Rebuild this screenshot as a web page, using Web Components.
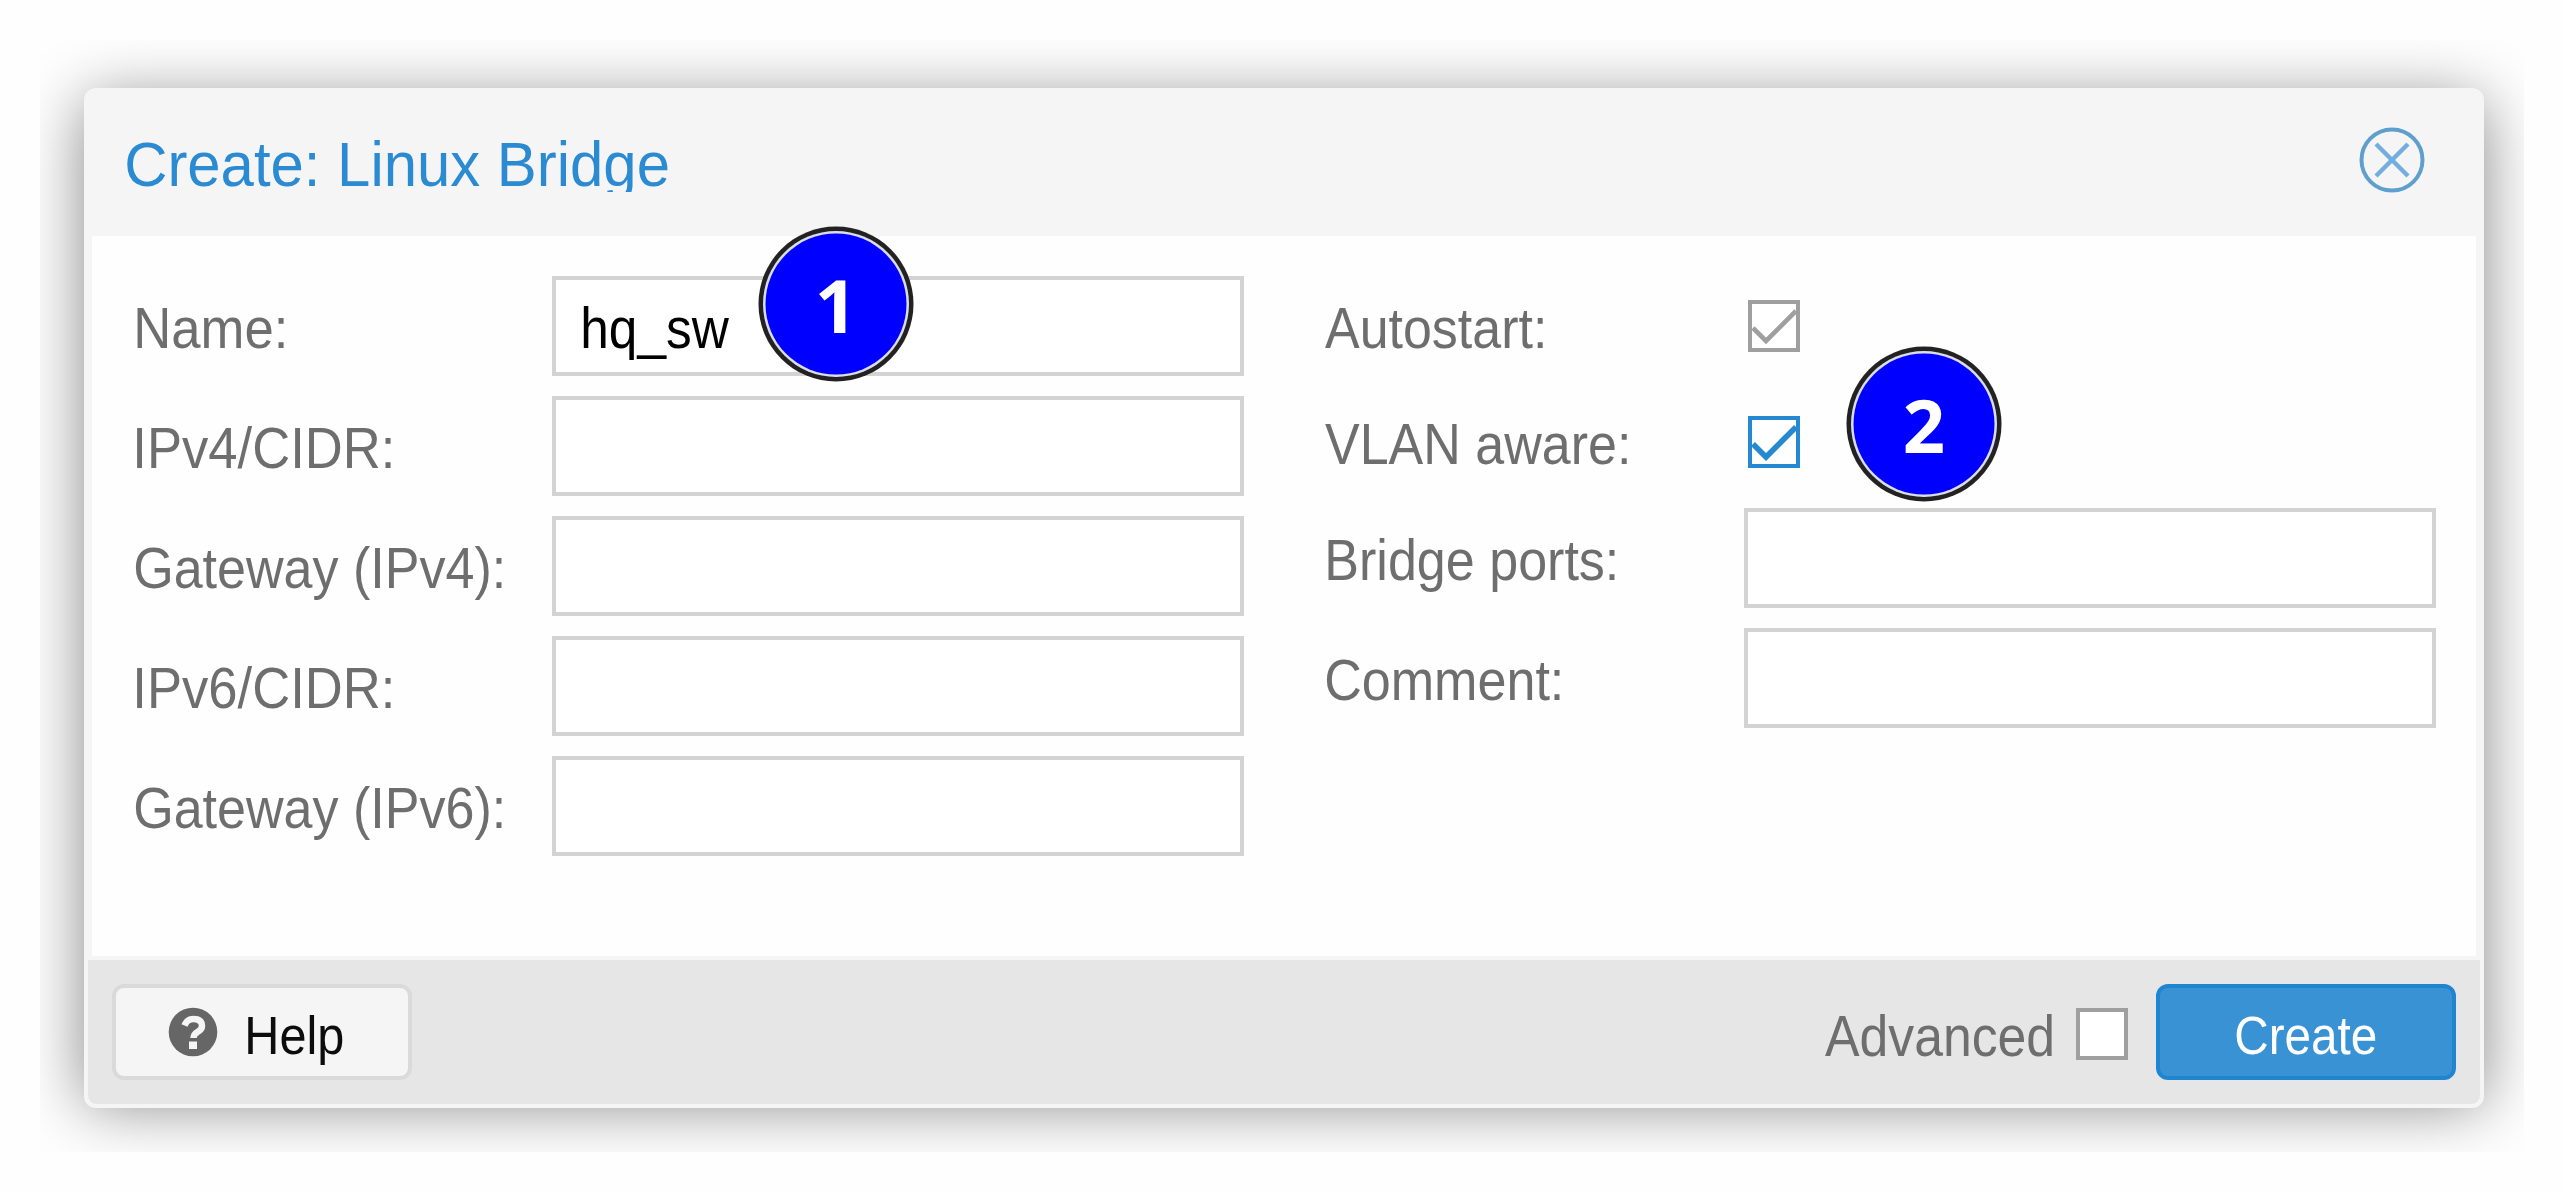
<!DOCTYPE html>
<html lang="en">
<head>
<meta charset="utf-8">
<title>Create: Linux Bridge</title>
<style>
html, body { margin: 0; background: #fefefe; }
body { width: 2564px; height: 1192px; overflow: hidden; font-family: "Liberation Sans", sans-serif; }
</style>
</head>
<body>
<bridge-dialog></bridge-dialog>
<script>
const define = (name, html, setup) => {
  const tpl = document.createElement('template');
  tpl.innerHTML = html;
  customElements.define(name, class extends HTMLElement {
    connectedCallback() {
      if (this.shadowRoot) return;
      this.attachShadow({ mode: 'open' }).append(tpl.content.cloneNode(true));
      if (setup) setup(this, this.shadowRoot);
    }
  });
};
const ctx = document.createElement('canvas').getContext('2d');

/* Text condensed so that its ink is exactly `ink` pixels wide, starting at the box's left edge */
define('fit-text', `
<style>
:host { display: block; flex: none; height: var(--line); line-height: var(--line); white-space: nowrap; overflow: visible; }
span { display: inline-block; transform-origin: 0 50%; }
</style><span><slot></slot></span>`, (el, root) => {
  const size = +el.getAttribute('size'), ink = +el.getAttribute('ink');
  ctx.font = size + 'px "Liberation Sans"';
  const m = ctx.measureText(el.textContent);
  const k = ink / (m.actualBoundingBoxRight + m.actualBoundingBoxLeft);
  el.style.width = ink + 'px';
  el.style.fontSize = size + 'px';
  root.querySelector('span').style.transform = `scaleX(${k}) translateX(${m.actualBoundingBoxLeft}px)`;
});

define('check-box', `
<style>
:host { display: block; flex: none; box-sizing: border-box; width: 52px; height: 52px; border: 4px solid #9f9f9f; background: #fff; color: #9f9f9f; }
:host([active]) { border-color: #2589d2; color: #2589d2; }
svg { display: none; width: 44px; height: 44px; }
:host([checked]) svg { display: block; }
path { fill: none; stroke: currentColor; stroke-width: 4.6; }
:host([active]) path { stroke-width: 5.6; }
</style><svg viewBox="0 0 44 44"><path d="M1 24 L14 37 L44 7"/></svg>`);

define('text-field', `
<style>
:host { display: block; flex: none; box-sizing: border-box; width: 692px; height: 100px; border: 4px solid #d3d3d3; background: #fff; color: #000; padding-left: 27px; }
</style><slot></slot>`);

define('form-row', `
<style>
:host { display: flex; align-items: flex-start; height: 100px; --line: 106px; }
:host([short]) { height: 96px; }
.label { width: 420px; box-sizing: border-box; flex: none; color: #6e6e6e; padding-left: var(--indent, 5px); }
:host([short]) .control { padding: 24px 0 0 4px; }
</style><div class="label"><slot name="label"></slot></div><div class="control"><slot></slot></div>`, (el) => {
  if (el.hasAttribute('indent')) el.style.setProperty('--indent', el.getAttribute('indent') + 'px');
});

define('step-badge', `
<style>
:host { position: absolute; display: block; width: 160px; height: 160px; }
svg { display: block; }
text { font: 700 74px "Open Sans", sans-serif; fill: #fff; text-anchor: middle; }
</style><svg width="160" height="160" viewBox="0 0 160 160"><circle cx="80" cy="80" r="77.5" fill="#222"/><circle cx="80" cy="80" r="73" fill="#dcdce8"/><circle cx="80" cy="80" r="70.5" fill="#0000fe"/><text x="80" y="108.5"></text></svg>`, (el, root) => {
  root.querySelector('text').textContent = el.getAttribute('value');
});

define('tool-button', `
<style>
:host { display: flex; box-sizing: border-box; width: 300px; height: 96px; border: 4px solid #dadada; border-radius: 12px; background: #f5f5f5; color: #0c0c0c; --line: 95px; }
:host([primary]) { background: #3892d4; border-color: #2085d0; color: #fff; }
</style><slot></slot>`);

define('help-icon', `
<style>:host { display: block; flex: none; width: 50px; height: 50px; } svg { display: block; }</style>
<svg width="50" height="50" viewBox="0 0 50 50"><circle cx="25" cy="25" r="24.3" fill="#666"/>
<path d="M16.5 18.5 Q19 12 25.5 12 Q34 12 34 19 Q34 22.500 29.500 25 Q25.500 27.500 25.500 31" fill="none" stroke="#f5f5f5" stroke-width="6.500"/><rect x="21" y="34.500" width="8" height="7.500" fill="#f5f5f5"/></svg>`);

define('close-icon', `
<style>:host { display: block; flex: none; width: 68px; height: 68px; } svg { display: block; }</style>
<svg width="68" height="68" viewBox="0 0 68 68" fill="none"><circle cx="34" cy="34" r="30.500" stroke="#5f9fcd" stroke-width="4"/><path d="M18 18 L50 50 M50 18 L18 50" stroke="#76ade0" stroke-width="4.500"/></svg>`);

define('bridge-dialog', `
<style>
:host { display: block; padding: 40px; }
.stage { box-sizing: border-box; width: 2484px; height: 1112px; padding: 48px 40px 44px 44px; overflow: hidden; }
.window { position: relative; width: 2400px; height: 1020px; }
.shadow { position: absolute; inset: 12px 0 3px 0; box-shadow: 0 0 64px #888; border-radius: 12px; }
.frame { position: relative; box-sizing: border-box; height: 1020px; border: 4px solid #f5f5f5; border-radius: 12px; background: #f5f5f5; display: flex; flex-direction: column; overflow: hidden; }
header { box-sizing: border-box; height: 144px; flex: none; display: flex; justify-content: space-between; padding: 34px 54px 0 39px; color: #2a8ad2; --line: 70px; }
.title { height: 66px; overflow: hidden; padding-top: 3px; box-sizing: border-box; }
main { box-sizing: border-box; height: 720px; flex: none; margin: 0 4px; background: #fefefe; display: flex; justify-content: space-between; padding: 40px 40px 0; }
.col { display: flex; flex-direction: column; gap: 20px; width: 1112px; }
footer { box-sizing: border-box; flex: 1; margin-top: 4px; background: #e6e6e6; border-radius: 0 0 8px 8px; display: flex; align-items: flex-start; padding: 24px 24px 0; }
.main-end { margin-left: auto; display: flex; }
help-icon { margin: 19px 0 0 52px; }
</style>
<div class="stage"><div class="window"><div class="shadow"></div>
<div class="frame">
<header><div class="title"><fit-text size="63" ink="541">Create: Linux Bridge</fit-text></div><close-icon></close-icon></header>
<main>
<div class="col">
<form-row><fit-text slot="label" size="56.500" ink="147">Name:</fit-text><text-field><fit-text size="56.500" ink="146" style="margin-top:-4px">hq_sw</fit-text></text-field></form-row>
<form-row><fit-text slot="label" size="56.500" ink="254">IPv4/CIDR:</fit-text><text-field></text-field></form-row>
<form-row indent="3"><fit-text slot="label" size="56.500" ink="367">Gateway (IPv4):</fit-text><text-field></text-field></form-row>
<form-row><fit-text slot="label" size="56.500" ink="254">IPv6/CIDR:</fit-text><text-field></text-field></form-row>
<form-row indent="3"><fit-text slot="label" size="56.500" ink="367">Gateway (IPv6):</fit-text><text-field></text-field></form-row>
</div>
<div class="col">
<form-row short indent="1"><fit-text slot="label" size="56.500" ink="218">Autostart:</fit-text><check-box checked></check-box></form-row>
<form-row short indent="1"><fit-text slot="label" size="56.500" ink="302">VLAN aware:</fit-text><check-box checked active></check-box></form-row>
<form-row indent="4"><fit-text slot="label" size="56.500" ink="287">Bridge ports:</fit-text><text-field></text-field></form-row>
<form-row indent="2"><fit-text slot="label" size="56.500" ink="234">Comment:</fit-text><text-field></text-field></form-row>
</div>
</main>
<footer>
<tool-button><help-icon></help-icon><fit-text size="53" ink="95" style="margin-left:30px">Help</fit-text></tool-button>
<div class="main-end">
<fit-text size="56.500" ink="227" style="--line:106px;color:#6e6e6e">Advanced</fit-text>
<check-box style="margin:24px 28px 0 24px"></check-box>
<tool-button primary><fit-text size="53" ink="140" style="margin-left:76px">Create</fit-text></tool-button>
</div>
</footer>
</div>
<step-badge value="1" style="left:672px;top:136px"></step-badge>
<step-badge value="2" style="left:1760px;top:256px"></step-badge>
</div></div>`);
</script>
</body>
</html>
